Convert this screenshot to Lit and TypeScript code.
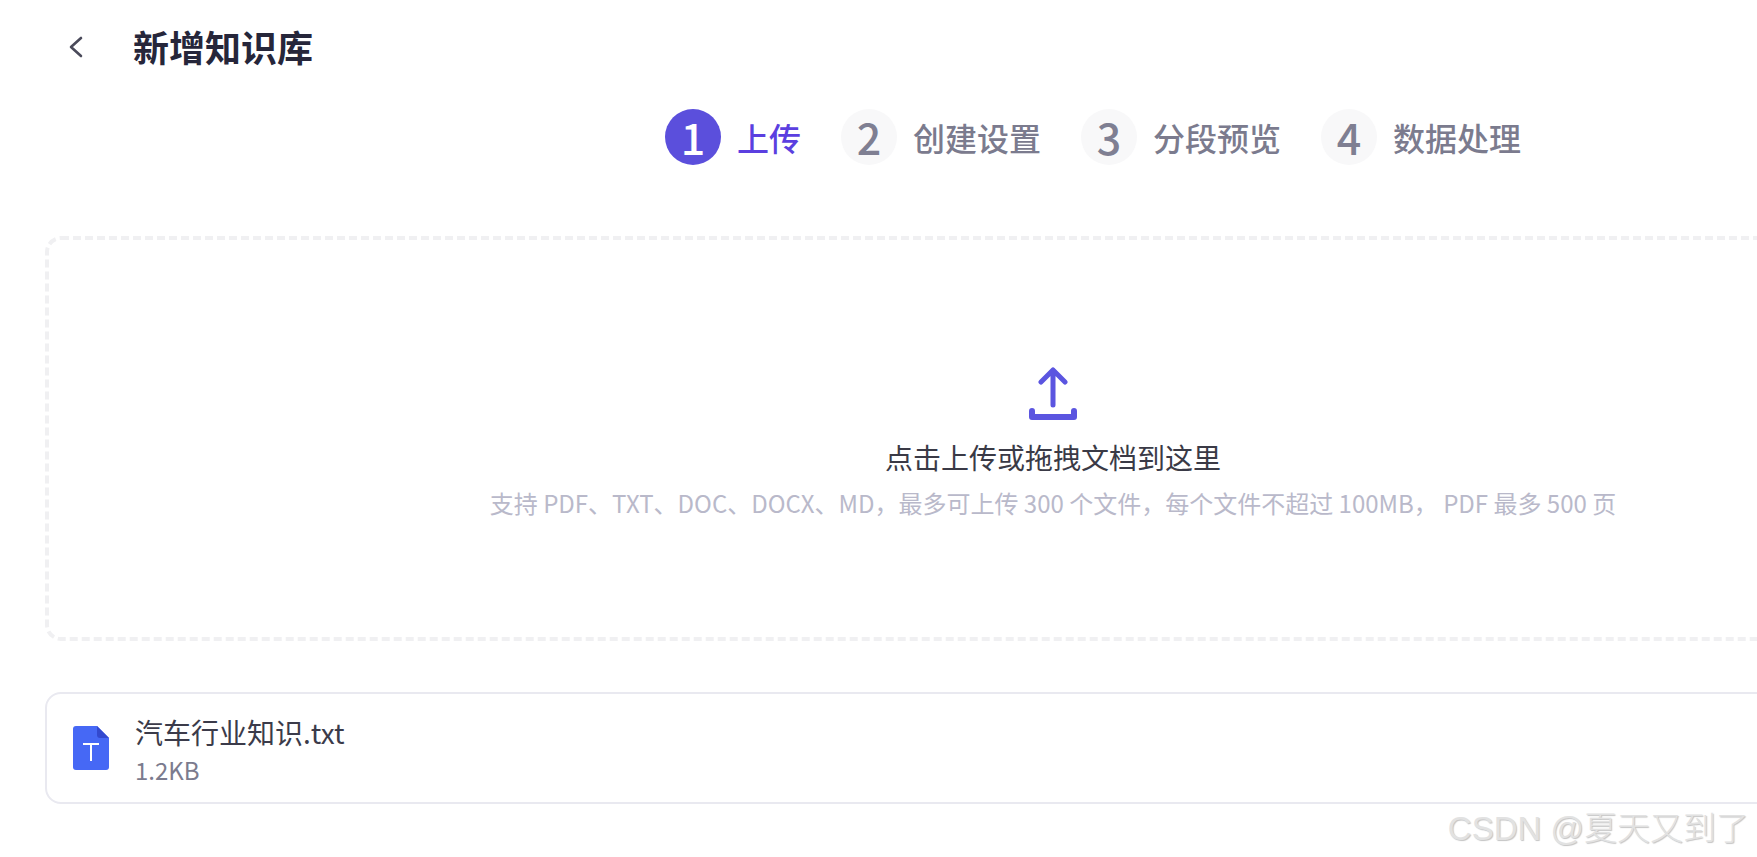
import { LitElement, html, css } from "lit";
import { customElement } from "lit/decorators.js";

@customElement("app-root")
export class AppRoot extends LitElement {
  static styles = css`
    :host { display: block; width: 1757px; height: 857px; overflow: hidden; background: #fff; font-family: "Noto Sans CJK SC", "Noto Sans", sans-serif; position: relative; }
    .head { display: flex; align-items: center; height: 94px; padding-left: 68px; box-sizing: border-box; }
    .back { width: 16px; height: 22px; margin-right: 49px; }
    h1 { margin: -3px 0 0; font-weight: 700; color: #26263a; font-size: 36px; line-height: 48px; }
    .steps { display: flex; margin-left: 665px; margin-top: 15px; height: 56px; align-items: center; }
    .step { display: flex; align-items: center; gap: 16px; margin-right: 40px; }
    .num { width: 56px; height: 56px; padding-bottom: 3px; box-sizing: border-box; border-radius: 50%; background: #f8f8f9; color: #7f7f92; font-size: 43px; font-weight: 500; display: flex; align-items: center; justify-content: center; }
    .label { font-size: 32px; color: #7b7b8e; font-weight: 500; white-space: nowrap; }
    .step.on .num { background: #5b4fdc; color: #fff; }
    .step.on .label { color: #5b3fe0; }
    .drop { position: relative; margin: 71px 0 0 45px; width: 2016px; height: 405px; box-sizing: border-box; display: flex; flex-direction: column; align-items: center; padding-top: 131px; }
    .dash { position: absolute; inset: 0; width: 100%; height: 100%; }
    .icon { display: block; }
    .title { font-size: 28px; color: #3a3a46; line-height: 40px; margin-top: 17px; }
    .hint { font-size: 24px; color: #b9b9ca; line-height: 34px; margin-top: 9px; white-space: nowrap; }
    .file { margin: 51px 0 0 45px; width: 1800px; height: 112px; box-sizing: border-box; border: 2px solid #e9e9f0; border-radius: 16px; display: flex; align-items: center; padding-left: 26px; gap: 26px; }
    .name { font-size: 28px; color: #3b3b4a; line-height: 40px; margin-top: 3px; }
    .size { font-size: 24px; color: #7b7b8e; line-height: 34px; margin-top: 1px; }
    .wm { position: absolute; right: 8px; bottom: 8px; font-size: 33px; line-height: 40px; font-weight: 300; color: #e2e2e2; text-shadow: 1px 1px 1px #c4c4c4; font-family: "Liberation Sans", "Noto Sans CJK SC", sans-serif; }
  `;
  render() {
    const steps = [["1", "上传"], ["2", "创建设置"], ["3", "分段预览"], ["4", "数据处理"]];
    return html`
      <div class="head">
        <svg class="back" viewBox="0 0 16 22" fill="none" stroke="#4a4a5a" stroke-width="2.6" stroke-linecap="round" stroke-linejoin="round"><path d="M13 2 L3 11 L13 20"/></svg>
        <h1>新增知识库</h1>
      </div>
      <div class="steps">
        ${steps.map(([n, l], i) => html`<div class="step ${i === 0 ? "on" : ""}"><div class="num">${n}</div><div class="label">${l}</div></div>`)}
      </div>
      <div class="drop">
        <svg class="dash" viewBox="0 0 2016 405" fill="none"><rect x="2" y="2" width="2012" height="401" rx="14" stroke="#f0f0f2" stroke-width="4" stroke-dasharray="8 4"/></svg>
        <svg class="icon" width="48" height="53" viewBox="0 0 48 53" fill="none" stroke="#5b55e0" stroke-linecap="round" stroke-linejoin="round"><path stroke-width="5" d="M24 3 V38 M12 15 L24 3 L36 15"/><path stroke-width="6" d="M3 44 V50 H45 V44"/></svg>
        <div class="title">点击上传或拖拽文档到这里</div>
        <div class="hint">支持 PDF、TXT、DOC、DOCX、MD，最多可上传 300 个文件，每个文件不超过 100MB， PDF 最多 500 页</div>
      </div>
      <div class="file">
        <svg width="36" height="44" viewBox="0 0 36 44"><path d="M3 0 H24 L36 12 V41 A3 3 0 0 1 33 44 H3 A3 3 0 0 1 0 41 V3 A3 3 0 0 1 3 0 Z" fill="#4668f5"/><path d="M24 0 L36 12 H27 A3 3 0 0 1 24 9 Z" fill="#3349cf"/><path d="M10 18 H26 M18 18 V35" stroke="#fff" stroke-width="2" fill="none"/></svg>
        <div><div class="name">汽车行业知识.txt</div><div class="size">1.2KB</div></div>
      </div>
      <div class="wm">CSDN @夏天又到了</div>
    `;
  }
}
